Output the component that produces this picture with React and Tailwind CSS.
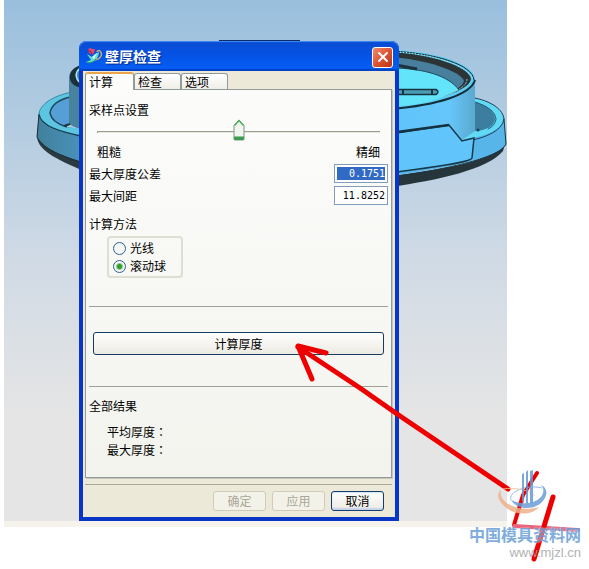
import React, { useState } from 'react';
import clsx from 'clsx';
import { X } from 'lucide-react';

const TABS = ['计算', '检查', '选项'];

const METHODS = [
  { id: 'ray', label: '光线' },
  { id: 'ball', label: '滚动球' }
];

const RESULTS = ['平均厚度', '最大厚度'];

const PartModel = () => (
  <svg
    className="absolute left-0 top-0 pointer-events-none"
    width="507"
    height="200"
    viewBox="0 0 507 200"
    fill="none"
    aria-hidden="true"
  >
    <defs>
      <linearGradient id="wall" x1="0" x2="1">
        <stop offset="0" stopColor="#5ec4fb" />
        <stop offset="0.7" stopColor="#66c6fa" />
        <stop offset="1" stopColor="#5aa9cf" />
      </linearGradient>
      <linearGradient id="leftWall" x1="0" x2="1">
        <stop offset="0" stopColor="#41809c" />
        <stop offset="1" stopColor="#4a93bd" />
      </linearGradient>
    </defs>

    {/* left flange */}
    <path d="M37 134 C36 150 54 158 86 172 V160 L50 140Z" fill="#2b3a40" />
    <path d="M39 112 L37 137 C44 149 62 156 86 163 V130 L50 124Z" fill="url(#leftWall)" />
    <path d="M39 114 L37 137 C44 150 62 156 86 164" stroke="#1d2d36" />
    <path d="M72 92 C52 96 38 105 39 116 C41 127 60 133 86 137 V129 L65 127 C54 124 50 118 50 113 C51 106 59 99 72 97Z" fill="#5cc6e2" />
    <path d="M39 114 C40 126 60 132 86 137" stroke="#173e50" strokeWidth="1.500" />
    <path d="M72 92 C52 96 39 105 39 115" stroke="#3e87a3" />
    <path d="M74 97 C59 99 51 106 50 113 C50 119 55 124 66 127 L70 122 V97Z" fill="#559fd6" />
    <path d="M70 97 C58 100 51 106 50 113 C51 119 57 124 67 127" stroke="#1f4659" strokeWidth="1.500" />
    <path d="M86 66 C74 67 69 71 69 78 V124 C73 127 79 129 86 130Z" fill="#47829f" />
    <path d="M64 126 L70 124" stroke="#1b3644" strokeWidth="2" />
    <path d="M86 64 C74 66 69 71 70 79 C71 84 75 87 86 89 V84 C77 83 74 77 76 73 C78 69 80 68 86 68Z" fill="#1d3038" />
    <path d="M84 67 C76 69 74 75 79 82" stroke="#a5e9f2" strokeWidth="1.500" />

    <path d="M219 40.500 H300" stroke="#0b2b6c" />

    {/* right flange */}
    <path d="M390 176 C450 169 498 160 506 141 L503 151 C488 169 440 180 390 187Z" fill="#26353c" />
    <path d="M472 98 C492 103 503 111 504 120 L506 143 C501 158 448 168 390 176 V130 L462 139Z" fill="#58b5ea" />
    <path d="M475 101 C489 106 496 113 496 119 C496 127 487 131 475 132Z" fill="#3c7e9f" />
    <path d="M475 98 C493 102 503 110 503 119 C502 131 482 137 464 139 L463 136 C479 133 494 129 495 119 C495 111 486 105 475 102Z" fill="#63daf5" />
    <path d="M475 98 C493 102 503 110 504 119 C502 132 482 139 462 142" stroke="#164055" />
    <path d="M475 102 C487 106 495 111 496 119 C495 126 489 130 479 132" stroke="#245b74" />
    <path d="M504 119 L506 144 C501 157 450 169 390 177" stroke="#173340" />

    {/* right cup */}
    <path d="M390 108 C440 104 474 94 475 79 V136 L462 141 L449 125 L390 133Z" fill="url(#wall)" />
    <path d="M475 131 C479 131 484 130 488 128 C489 132 476 138 462 140Z" fill="#63daf5" />
    <circle cx="478" cy="130" r="1.500" fill="#173f52" />
    <path d="M390 133 L449 125 L462 141 L474 138 L472 158 C471 162 430 167 390 173Z" fill="#61c4fb" />
    <path d="M390 134 L449 125 L462 141 L474 138 L472 158 C470 163 430 167 390 173" stroke="#16394a" strokeWidth="1.500" />
    <path d="M390 133 L449 125" stroke="#14323f" strokeWidth="2.500" />
    <path d="M390 50 C436 51 474 64 475 79 C474 94 440 105 390 109Z" fill="#5fcdf0" />
    <path d="M390 52 C430 54 469 66 471 79 C470 90 436 102 390 107Z" fill="#2d3436" />
    <path d="M390 57 C424 59 461 71 464 81 C462 91 432 101 390 105Z" fill="#477f9d" />
    <path d="M390 68 C424 68 449 76 459 90 C440 100 420 105 390 107Z" fill="#64e4fb" />
    <path d="M390 68 C424 68 449 76 459 90" stroke="#1e4b5c" />
    <path d="M396 65 L417 69" stroke="#1c333d" strokeWidth="3" />
    <path d="M390 51 C436 53 473 65 474 80" stroke="#102e3b" />
    <path d="M400 52 C438 55 470 67 473 80" stroke="#c8eef2" strokeDasharray="1 2" />
    <path d="M475 80 C471 94 440 105 390 109" stroke="#112e3a" strokeWidth="2" />
    <path d="M467 79 C467 86 458 91 443 96" stroke="#75cadb" strokeDasharray="2 1" />
    <path d="M390 89.500 H436 Q440 92 436 94.500 H390" fill="#4c9db4" stroke="#163541" strokeWidth="1.500" />
    <path d="M403 90 V94 M432 90 V94" stroke="#163541" strokeWidth="2" />
  </svg>
);

const AppIcon = () => (
  <svg width="18" height="18" viewBox="0 0 18 18" fill="none" aria-hidden="true">
    <path d="M10 13 C16 12 18 7 15 4 C14 3 12 4 12 5" stroke="#c9a878" strokeWidth="1.500" />
    <path d="M2 7 L7 10 L10 7 L14 5 C14 9 11 14 7 15 C5 16 3 16 1 15 L6 13Z" fill="#62dfc8" />
    <path d="M7 10 L12 6 L9 12Z" fill="#d6fff5" />
    <path d="M1 15 C5 17 9 15 11 12" stroke="#1d907e" />
    <path d="M3 2 L6 1 L7 2 L10 2 L9 6 L7 8 L4 6Z" fill="#e2446d" />
    <path d="M3 3 L6 5 L7 8" stroke="#8b2345" />
  </svg>
);

const DensitySlider = () => {
  const [value, setValue] = useState(50);

  return (
    <div className="relative mx-2 h-6">
      <div className="absolute inset-x-0 top-3 h-0.5 border-t border-l border-[#9b9b91] bg-[#e8e8e3]" />
      <div className="absolute inset-x-1.5 top-0 h-full">
        <svg
          className="absolute top-0 -ml-1.5"
          style={{ left: `${value}%` }}
          width="12"
          height="22"
          viewBox="0 0 12 22"
          aria-hidden="true"
        >
          <path d="M1 6.500 L6 1 L11 6.500 V20 Q11 21 10 21 H2 Q1 21 1 20Z" fill="#f2f4ef" stroke="#7b9a80" />
          <path d="M1.500 6.500 L6 1.500 L10.500 6.500" fill="none" stroke="#4fae5a" strokeWidth="1.500" />
          <path d="M1 17.500 H11 V20 Q11 21 10 21 H2 Q1 21 1 20Z" fill="#3f9a52" />
        </svg>
      </div>
      <input
        type="range"
        aria-labelledby="sampling"
        value={value}
        onChange={e => setValue(Number(e.target.value))}
        className="absolute inset-0 w-full h-full opacity-0 cursor-pointer"
      />
    </div>
  );
};

const NumberField = ({ id, label, value, selected }) => {
  const [text, setText] = useState(value);

  return (
    <div className="flex items-center justify-between">
      <label htmlFor={id}>{label}</label>
      <div className="w-[54px] h-[19px] p-0.5 border border-[#7f9db9] bg-white">
        <input
          id={id}
          value={text}
          onChange={e => setText(e.target.value)}
          className={clsx(
            "block w-full h-full text-right text-[10px] font-['DejaVu_Sans_Mono',monospace] outline-none",
            selected ? 'bg-[#316ac5] text-white' : 'bg-white text-black'
          )}
        />
      </div>
    </div>
  );
};

const FooterButton = ({ disabled, children }) => (
  <button
    disabled={disabled}
    className={clsx(
      'w-[53px] h-5 rounded-[3px] border leading-4',
      disabled
        ? 'border-[#cfccbc] bg-[#f3f2e9] text-[#a9a797]'
        : 'border-[#123f70] bg-linear-to-b from-white to-[#eceae2] shadow-[inset_0_-2px_1px_#c6d5ea,inset_0_1px_1px_#d5e2f3]'
    )}
  >
    {children}
  </button>
);

const ThicknessDialog = () => {
  const [tab, setTab] = useState(0);
  const [method, setMethod] = useState('ball');

  return (
    <div
      role="dialog"
      aria-labelledby="title"
      className="relative w-80 rounded-t-lg border-x-4 border-b-4 border-[#0a36c8] bg-[#ece9d8] text-xs leading-[18px] text-black"
    >
      {/* Title bar */}
      <div className="-mx-1 h-[30px] px-1.5 flex items-center gap-0.5 rounded-t-lg bg-linear-to-b from-[#0a4bd0] via-[#0453e6] to-[#0560f6] shadow-[inset_0_1px_1px_#3f8cf5,inset_0_-2px_1px_#0342c4]">
        <AppIcon />
        <h1 id="title" className="flex-1 text-sm font-bold text-white [text-shadow:1px_1px_1px_#07298a]">
          壁厚检查
        </h1>
        <button
          aria-label="关闭"
          className="size-[21px] mt-0.5 flex items-center justify-center rounded-[3px] border border-white bg-linear-to-br from-[#ec8b6e] via-[#dd5332] to-[#b93413] text-white"
        >
          <X size={16} strokeWidth={3} />
        </button>
      </div>

      <div className="px-0.5 border-r border-[#dfe7f5]">
        {/* Tabs */}
        <div role="tablist" className="flex items-end h-[18px] pt-px">
          {TABS.map((name, i) => (
            <button
              key={name}
              role="tab"
              aria-selected={tab === i}
              onClick={() => setTab(i)}
              className={clsx(
                'pl-[3px] text-left leading-4 border-x border-[#919b9c] rounded-t-[3px]',
                tab === i
                  ? 'w-[49px] h-[18px] -mb-px relative bg-[#fcfcfb] border-t-2 border-t-[#e9a44c]'
                  : 'w-[47px] h-4 bg-linear-to-b from-white to-[#efeee6] border-t'
              )}
            >
              {name}
            </button>
          ))}
        </div>

        {/* Panel */}
        <div className="px-[3px] pt-[11px] pb-[18px] border border-[#919b9c] bg-linear-to-b from-[#fcfcfb] to-[#f3f3ee] shadow-[1px_1px_0_#c9c6b8]">
          <h2 id="sampling">采样点设置</h2>
          <DensitySlider />
          <div className="flex justify-between px-2 mb-[3px]">
            <span>粗糙</span>
            <span>精细</span>
          </div>
          <div className="space-y-[3px]">
            <NumberField id="tolerance" label="最大厚度公差" value="0.1751" selected />
            <NumberField id="spacing" label="最大间距" value="11.8252" />
          </div>

          <h2 className="mt-2.5">计算方法</h2>
          <div
            role="radiogroup"
            aria-label="计算方法"
            className="w-[76px] ml-[18px] mt-[3px] px-1 py-px rounded-[4px] border-2 border-[#deded2]"
          >
            {METHODS.map(m => (
              <label key={m.id} className="flex items-center gap-1 whitespace-nowrap">
                <input
                  type="radio"
                  name="method"
                  checked={method === m.id}
                  onChange={() => setMethod(m.id)}
                  className="appearance-none shrink-0 size-[13px] rounded-full border border-[#30628f] bg-[#f4f6f5] checked:bg-[radial-gradient(circle,#2ea02a_0_2px,#f4f6f5_4px)]"
                />
                {m.label}
              </label>
            ))}
          </div>

          <hr className="mt-7 border-[#a0a198]" />
          <div className="px-1 py-[25px]">
            <button className="block w-full h-[23px] rounded-[3px] border border-[#163c5e] bg-linear-to-b from-white to-[#eceae2]">
              计算厚度
            </button>
          </div>
          <hr className="mt-1.5 border-[#a0a198]" />

          <h2 className="mt-2.5">全部结果</h2>
          <ul className="mt-2 pl-[18px]">
            {RESULTS.map(r => (
              <li key={r}>
                {r}
                <span className="font-['Noto_Sans_CJK_TC',sans-serif]" lang="zh-TW">：</span>
              </li>
            ))}
          </ul>
        </div>

        {/* Footer */}
        <div className="mt-1.5 py-1.5 pr-2 flex justify-end gap-1.5 border-t border-[#aca899]">
          <FooterButton disabled>确定</FooterButton>
          <FooterButton disabled>应用</FooterButton>
          <FooterButton>取消</FooterButton>
        </div>
      </div>
    </div>
  );
};

const Annotation = () => (
  <svg
    className="absolute left-0 top-0 pointer-events-none"
    width="589"
    height="569"
    viewBox="0 0 589 569"
    fill="none"
    aria-hidden="true"
  >
    <g stroke="#ee0000" strokeWidth="5" strokeLinecap="round" strokeLinejoin="round">
      <path d="M298 347 L360 388 L400 416 L508 489" />
      <path d="M326 353 L298 346 L312 379" />
      <path d="M537 473 L523 495 L514 525" strokeWidth="4" />
      <path d="M514 526 L578 530" stroke="#ea6178" strokeWidth="4" />
      <path d="M553 497 L534 559" />
    </g>
  </svg>
);

const Watermark = () => (
  <div className="absolute right-2 top-[468px] flex flex-col items-end opacity-85">
    <svg className="mr-[30px]" width="56" height="52" viewBox="0 0 56 52" fill="none" aria-hidden="true">
      <path d="M6 22 C3 35 24 45 44 39 C36 49 17 47 8 37 C2 31 2 25 6 22Z" fill="#eeb28d" />
      <path d="M46 17 C55 27 37 42 16 32 C22 43 43 43 50 30 C53 24 51 19 46 17Z" fill="#6c9ed8" />
      <path d="M16 32 C13 24 31 16 47 20" stroke="#83b0e2" />
      <path d="M8 21 C20 19 34 22 40 28" stroke="#f0c795" />
      <path d="M27 6 L29 5 V35 L27 33Z M31 4 L33 2 V37 L31 35Z M35 3 L38 2 V35 L35 37Z" fill="#6498d6" />
    </svg>
    <div className="text-base leading-7 font-bold whitespace-nowrap text-[#6b9fd8] [text-shadow:0_0_2px_white]">
      中国模具资料网
    </div>
    <a href="#" className="-mt-[3px] text-[13px] leading-4 text-[#a5a5a5] font-['Liberation_Sans',sans-serif]">
      www.mjzl.cn
    </a>
  </div>
);

export default function App() {
  return (
    <div className="relative min-h-screen overflow-hidden bg-white font-['Noto_Sans_CJK_SC',sans-serif]">
      <div className="relative">
        <main className="ml-1 mr-[82px] pl-[75px] pt-[41px] bg-linear-to-b from-[#99bfdd] via-[#d0dae5] via-50% to-[#e5e5e5] to-80%">
          <PartModel />
          <ThicknessDialog />
        </main>
        <div className="ml-1 mr-[82px] h-1.5 bg-[#f6f3ed]" />
      </div>
      <Annotation />
      <Watermark />
    </div>
  );
}
